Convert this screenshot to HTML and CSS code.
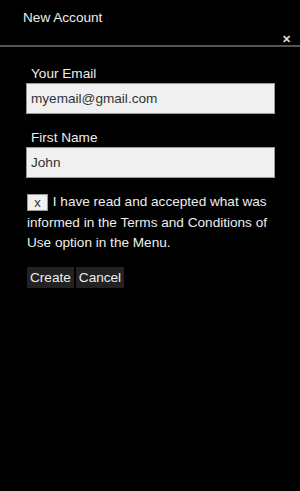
FILE: index.html
```html
<!DOCTYPE html>
<html lang="en">
<head>
    <meta charset="UTF-8">
    <meta name="viewport" content="width=device-width, initial-scale=1.0">
    <title>New Account</title>
    <link rel="stylesheet" href="styles.css">
</head>
<body>
    <div class="header">
        <h1>New Account</h1>
        <span class="close-btn">&#x2715;</span>
    </div>

    <div class="form">
        <div class="field">
            <label>Your Email</label>
            <input type="text" value="myemail@gmail.com">
        </div>
        <div class="field">
            <label>First Name</label>
            <input type="text" value="John">
        </div>

        <div class="terms">
            <span class="check-box">x</span>
            <span class="terms-text">I have read and accepted what was informed in the Terms and Conditions of Use option in the Menu.</span>
        </div>

        <div class="actions">
            <button>Create</button>
            <button>Cancel</button>
        </div>
    </div>
</body>
</html>
```

FILE: styles.css
```css
* {
    margin: 0;
    padding: 0;
    box-sizing: border-box;
    font-family: 'Liberation Sans', Arial, sans-serif;
}

body {
    background-color: #000;
    color: #eee;
    width: 300px;
    height: 491px;
    overflow: hidden;
}

.header {
    position: relative;
    height: 47px;
    border-bottom: 2px solid #555;
    padding: 10px 0 0 23px;
}

.header h1 {
    font-size: 13.6px;
    font-weight: normal;
    color: #eee;
}

.header .close-btn {
    position: absolute;
    right: 9px;
    bottom: -1px;
    font-size: 11px;
    font-weight: bold;
    color: #ddd;
}

.form {
    padding: 19px 25px 0 26px;
}

.field {
    margin-bottom: 16px;
}

.field label {
    display: block;
    font-size: 13.6px;
    padding-left: 5px;
    margin-bottom: 2px;
}

.field input {
    display: block;
    width: 100%;
    height: 31px;
    padding: 0 4px;
    font-size: 13.6px;
    color: #333;
    background: #f0f0f0;
    border: 1px solid #999;
    outline: none;
}

.terms {
    font-size: 13.6px;
    line-height: 20.5px;
    padding-left: 1px;
    margin-top: -2px;
}

.check-box {
    display: inline-block;
    width: 21px;
    height: 17px;
    line-height: 15px;
    margin-right: 1px;
    text-align: center;
    font-size: 13px;
    color: #333;
    background: #f0f0f0;
    border: 1px solid #999;
    vertical-align: middle;
}

.actions {
    display: flex;
    gap: 2px;
    margin-top: 13px;
    padding-left: 1px;
}

.actions button {
    font-size: 13.6px;
    color: #eee;
    background: #222;
    border: none;
    height: 21px;
    padding: 0 3px;
}
```
